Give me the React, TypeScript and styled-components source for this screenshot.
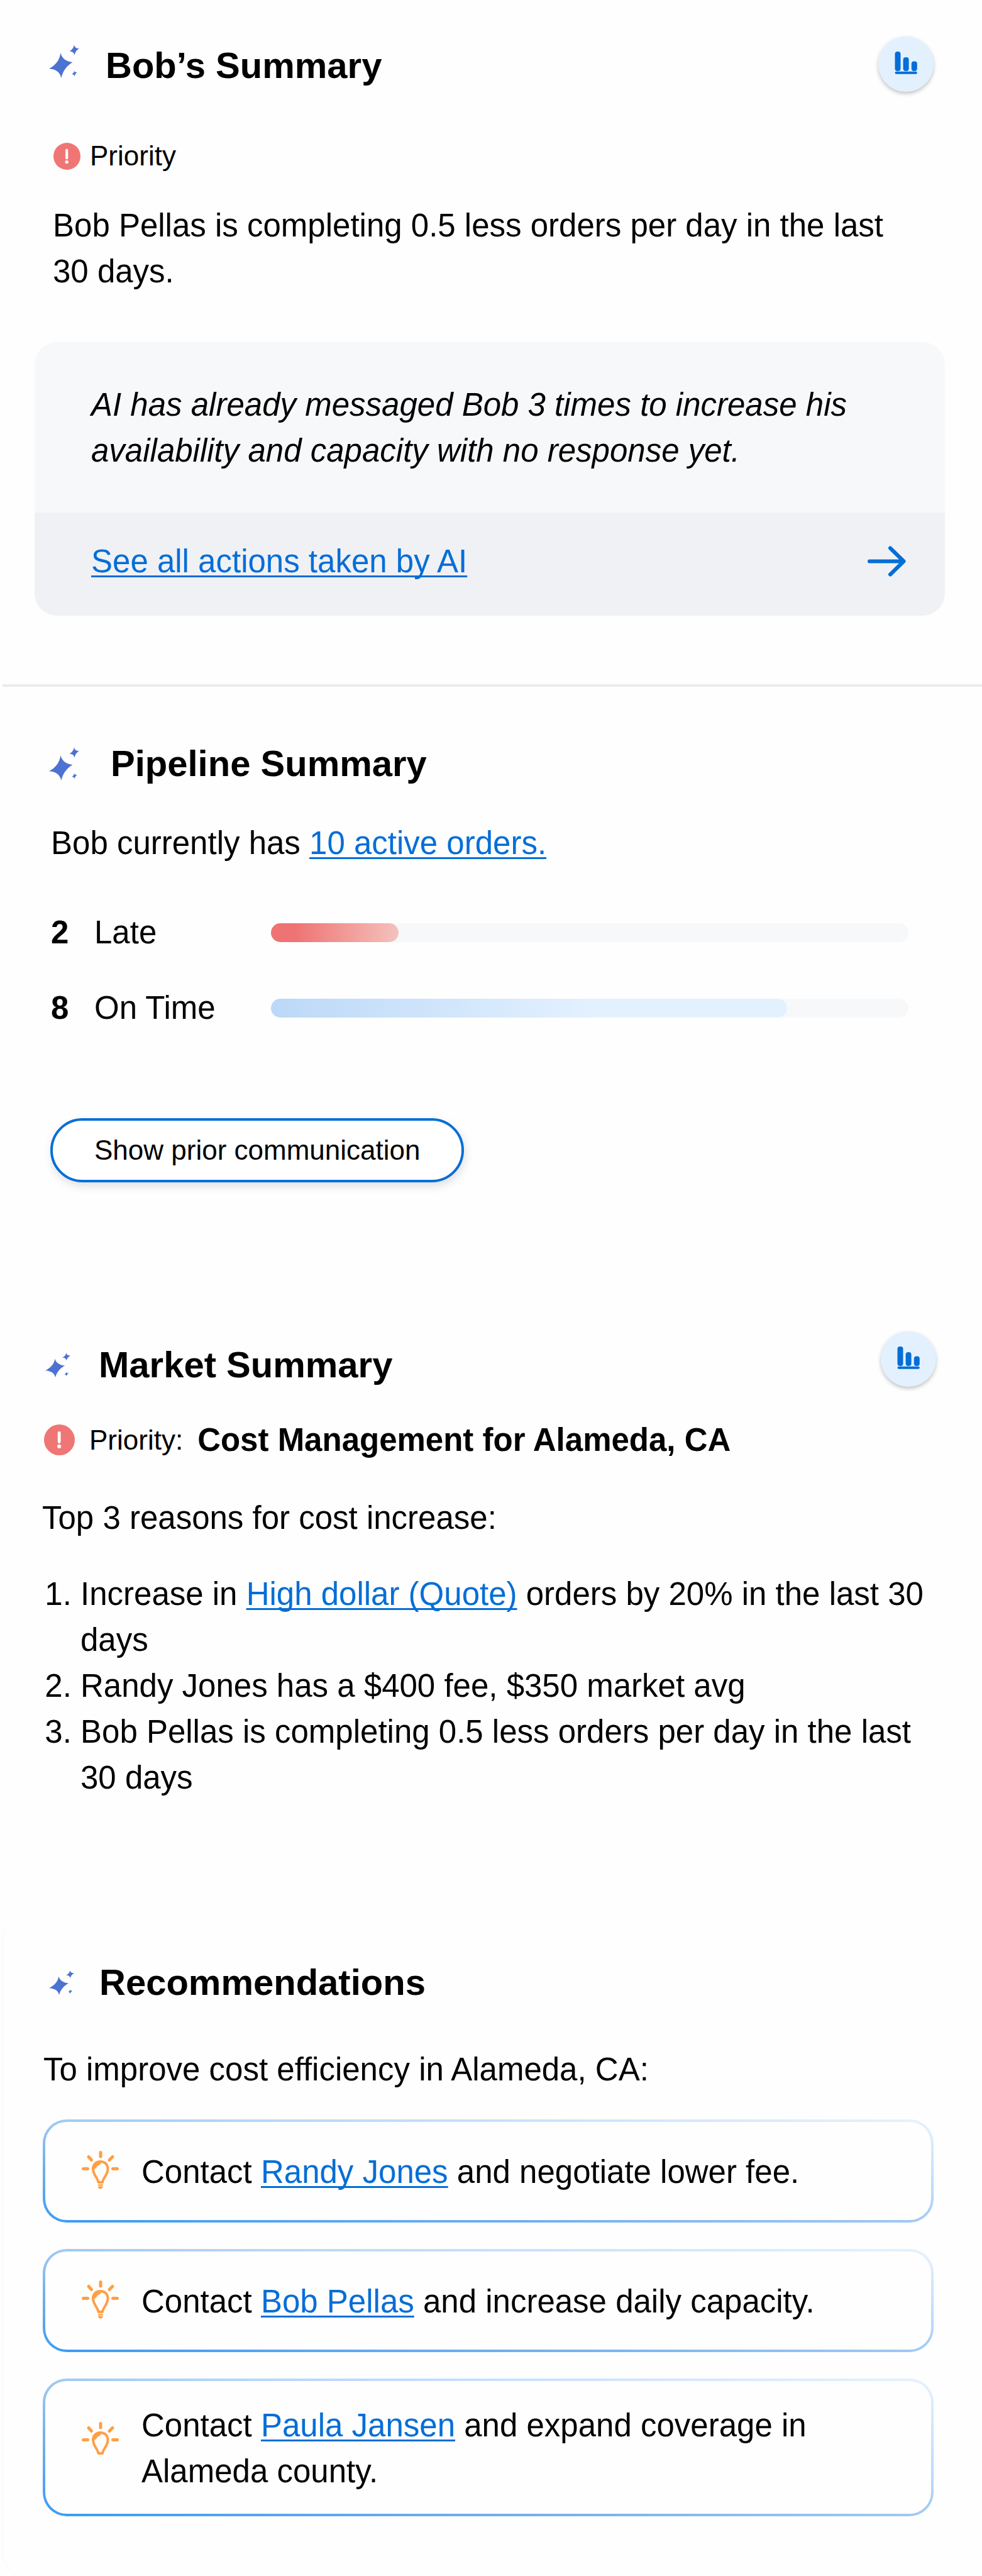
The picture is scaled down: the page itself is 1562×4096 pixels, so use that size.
import React from "react";
import styled, { createGlobalStyle } from "styled-components";

const GlobalStyle = createGlobalStyle`
  *, *::before, *::after { box-sizing: border-box; }
  body {
    margin: 0;
    background: #fefefe;
    color: #000;
    font-family: "Liberation Sans", Arial, Helvetica, sans-serif;
    font-size: 51px;
    line-height: 73px;
  }
  h2, p, ol, ul { margin: 0; padding: 0; }
  svg { display: block; flex: none; }
`;

const blue = "#056ed6";

const Page = styled.main`
  display: flex;
  flex-direction: column;
`;

const Section = styled.section<{ $top: number; $bottom: number }>`
  display: flex;
  flex-direction: column;
  padding: ${(p) => p.$top}px 59px ${(p) => p.$bottom}px 55px;
`;

const Divider = styled.hr`
  width: calc(100% - 4px);
  height: 4px;
  margin: 0 0 0 4px;
  border: 0;
  background: #ebebeb;
`;

const Header = styled.header<{ $left: number; $right?: number }>`
  display: flex;
  align-items: flex-start;
  justify-content: space-between;
  padding: 0 ${(p) => p.$right ?? 14}px 0 ${(p) => p.$left}px;
`;

const TitleRow = styled.div<{ $gap: number; $top?: number; $align?: string }>`
  display: flex;
  align-items: ${(p) => p.$align ?? "baseline"};
  gap: ${(p) => p.$gap}px;
  padding-top: ${(p) => p.$top ?? 0}px;
`;

const Title = styled.h2`
  font-size: 58px;
  line-height: 80px;
  font-weight: 700;
`;

const ChartButton = styled.button`
  display: flex;
  align-items: center;
  justify-content: center;
  width: 88px;
  height: 88px;
  flex: none;
  padding: 0;
  border: 0;
  border-radius: 50%;
  background: #e3f1ff;
  box-shadow: 0 3px 6px rgba(0, 0, 0, 0.24);
  cursor: pointer;
`;

const Text = styled.p<{ $top: number; $left: number; $right?: number }>`
  margin-top: ${(p) => p.$top}px;
  padding: 0 ${(p) => p.$right ?? 0}px 0 ${(p) => p.$left}px;
`;

const PriorityRow = styled.div<{ $top: number; $left: number; $gap: number }>`
  display: flex;
  align-items: center;
  gap: ${(p) => p.$gap}px;
  margin-top: ${(p) => p.$top}px;
  padding-left: ${(p) => p.$left}px;
`;

const Small = styled.span`
  font-size: 44px;
  line-height: 60px;
`;

const Link = styled.a`
  color: ${blue};
  text-decoration: underline;
  text-decoration-thickness: 3px;
  text-underline-offset: 5px;
  text-decoration-skip-ink: none;
`;

const AiCard = styled.div`
  display: flex;
  flex-direction: column;
  margin-top: 76px;
  border-radius: 36px;
  overflow: hidden;
  background: #f7f8fa;
`;

const AiMessage = styled.p`
  padding: 63px 88px 62px 90px;
  font-style: italic;
`;

const AiFooter = styled.div`
  display: flex;
  align-items: center;
  justify-content: space-between;
  padding: 41px 62px 50px 90px;
  background: #f0f1f5;
`;

const StatList = styled.ul`
  display: flex;
  flex-direction: column;
  gap: 47px;
  margin-top: 69px;
  padding: 0 58px 0 26px;
  list-style: none;
`;

const StatRow = styled.li`
  display: grid;
  grid-template-columns: 69px 281px 1fr;
  align-items: center;
`;

const Track = styled.div`
  height: 30px;
  border-radius: 15px;
  background: #f7f8fa;
`;

const Fill = styled.div<{ $tone: "late" | "ontime" }>`
  height: 100%;
  border-radius: 15px;
  background: ${(p) =>
    p.$tone === "late"
      ? "linear-gradient(90deg, #ee7372 18%, #f4c2bd)"
      : "linear-gradient(90deg, #bcd8f7, #e3f1ff 62%)"};
`;

const OutlineButton = styled.button`
  align-self: flex-start;
  margin: 139px 0 0 25px;
  padding: 17px 66px;
  border: 4px solid ${blue};
  border-radius: 51px;
  background: #fff;
  color: #000;
  font-family: inherit;
  font-size: 44px;
  line-height: 60px;
  box-shadow: 2px 6px 14px rgba(60, 70, 90, 0.16);
  cursor: pointer;
`;

const Reasons = styled.ol`
  margin-top: 48px;
  padding-left: 73px;
`;

const Panel = styled(Section)`
  margin-left: 4px;
  padding-left: 50px;
  border-left: 1px solid #f6f6f6;
  border-radius: 36px;
`;

const TipList = styled.ul`
  display: flex;
  flex-direction: column;
  gap: 42px;
  margin-top: 43px;
  padding: 0 18px 0 13px;
  list-style: none;
`;

const Tip = styled.li`
  display: flex;
  align-items: center;
  gap: 36px;
  min-height: 164px;
  padding: 34px 58px 31px;
  border: 4px solid transparent;
  border-radius: 38px;
  background:
    linear-gradient(#fefefe, #fefefe) padding-box,
    linear-gradient(to top right, #3a9bf6, #74b0ed 28%, #b9d7f8 62%, #e6f2ff) border-box;
`;

const TipIcon = styled.div<{ $tall: boolean }>`
  flex: none;
  margin-bottom: ${(p) => (p.$tall ? 24 : 6)}px;
`;

function Sparkle({ small = false }: { small?: boolean }) {
  return (
    <svg
      width={small ? 40 : 48}
      height={small ? 39 : 53}
      viewBox="0 0 48 53"
      preserveAspectRatio="none"
      fill="#4c72d2"
      aria-hidden="true"
    >
      <path d="M18.5 13C20 21 26 26.5 37.5 28C30 32 22 41 19.4 53C17.5 44 11 39 0 38.3C9 33.5 16.5 26 18.5 13Z" />
      <path d="M40 0C40.6 4 43 6 48 6C44 8.4 41.4 12 40.4 16.7C39.6 12.6 37 10.6 32.4 10.7C36.6 8.4 39.2 5 40 0Z" />
      <path d="M40.4 41.7C41 43.4 42 44.2 44.6 44C42.6 45.6 41.2 47.6 40.4 50.3C39.8 48 38.6 47 36.2 47C38.2 45.6 39.6 44.4 40.4 41.7Z" />
    </svg>
  );
}

function ChartIcon() {
  return (
    <svg width="36" height="40" viewBox="0 0 36 40" fill={blue} aria-hidden="true">
      <rect x="0.5" y="0" width="9" height="31" rx="4" />
      <rect x="13.6" y="9" width="9" height="22" rx="4" />
      <rect x="26.8" y="15.6" width="9" height="15.4" rx="4" />
      <rect x="0.5" y="31.7" width="35.3" height="4" rx="2" />
    </svg>
  );
}

function AlertIcon({ size }: { size: number }) {
  return (
    <svg width={size} height={size} viewBox="0 0 43 43" aria-hidden="true">
      <circle cx="21.5" cy="21.5" r="21.5" fill="#ef7675" />
      <path d="M21.2 11.8V24.4" stroke="#fff" strokeWidth="4.2" strokeLinecap="round" />
      <circle cx="21.2" cy="30.6" r="2.7" fill="#fff" />
    </svg>
  );
}

function ArrowIcon() {
  return (
    <svg
      width="61"
      height="49"
      viewBox="0 0 61 49"
      fill="none"
      stroke={blue}
      strokeWidth="6"
      strokeLinecap="round"
      strokeLinejoin="round"
      aria-hidden="true"
    >
      <path d="M3 24.5H57M36 3.5L57.5 24.5L36 45.5" />
    </svg>
  );
}

function BulbIcon({ base }: { base: boolean }) {
  return (
    <svg width="59" height="61" viewBox="0 0 59 61" fill="none" stroke="#ff9f45" aria-hidden="true">
      <path
        d="M30 2.5V9M2.5 28.5H9.5M49.5 28.5H56.5M11 9.5L15.5 14.5M49 9.5L44 14.5"
        strokeWidth="5"
        strokeLinecap="round"
      />
      <path
        d="M26.5 50C25.5 43 18 38 18 28.5C18 21.5 23 17 29.7 17C36.5 17 41.5 21.5 41.5 28.5C41.5 38 34 43 33 50Z"
        strokeWidth="4"
        strokeLinejoin="round"
      />
      <path
        d="M19 28.5C19 21.5 23.5 18 30.5 18.5C30 21.5 27.5 22.5 24.5 23.5C23.5 26 23 28 19 28.5Z"
        fill="#ff9f45"
        strokeWidth="1"
      />
      {base && (
        <path
          d="M25.8 53.2H33.8V55.4H25.8ZM25.8 56.4H33.8C33.8 59 32 60.5 29.8 60.5C27.6 60.5 25.8 59 25.8 56.4Z"
          fill="#ff9f45"
          stroke="none"
        />
      )}
    </svg>
  );
}

const stats: { count: number; label: string; tone: "late" | "ontime"; share: number }[] = [
  { count: 2, label: "Late", tone: "late", share: 20 },
  { count: 8, label: "On Time", tone: "ontime", share: 81 },
];

const tips = [
  { name: "Randy Jones", action: "and negotiate lower fee.", tall: false },
  { name: "Bob Pellas", action: "and increase daily capacity.", tall: false },
  { name: "Paula Jansen", action: "and expand coverage in Alameda county.", tall: true },
];

export default function App() {
  return (
    <>
      <GlobalStyle />
      <Page>
        <Section $top={58} $bottom={109}>
          <Header $left={23} $right={18}>
            <TitleRow $gap={42} $top={6}>
              <Sparkle />
              <Title>Bob’s Summary</Title>
            </TitleRow>
            <ChartButton type="button" aria-label="Show chart">
              <ChartIcon />
            </ChartButton>
          </Header>
          <PriorityRow $top={72} $left={30} $gap={15}>
            <AlertIcon size={43} />
            <Small>Priority</Small>
          </PriorityRow>
          <Text $top={44} $left={29} $right={60}>
            Bob Pellas is completing 0.5 less orders per day in the last 30 days.
          </Text>
          <AiCard>
            <AiMessage>
              AI has already messaged Bob 3 times to increase his availability and capacity with no
              response yet.
            </AiMessage>
            <AiFooter>
              <Link href="#actions">See all actions taken by AI</Link>
              <a href="#actions" aria-label="Open actions">
                <ArrowIcon />
              </a>
            </AiFooter>
          </AiCard>
        </Section>

        <Divider />

        <Section $top={82} $bottom={237}>
          <Header $left={23}>
            <TitleRow $gap={50} $align="center">
              <Sparkle />
              <Title>Pipeline Summary</Title>
            </TitleRow>
          </Header>
          <Text $top={50} $left={26}>
            Bob currently has <Link href="#orders">10 active orders.</Link>
          </Text>
          <StatList>
            {stats.map((s) => (
              <StatRow key={s.label}>
                <strong>{s.count}</strong>
                <span>{s.label}</span>
                <Track>
                  <Fill $tone={s.tone} style={{ width: `${s.share}%` }} />
                </Track>
              </StatRow>
            ))}
          </StatList>
          <OutlineButton type="button">Show prior communication</OutlineButton>
        </Section>

        <Section $top={0} $bottom={187}>
          <Header $left={17}>
            <TitleRow $gap={45} $top={13}>
              <Sparkle small />
              <Title>Market Summary</Title>
            </TitleRow>
            <ChartButton type="button" aria-label="Show chart">
              <ChartIcon />
            </ChartButton>
          </Header>
          <PriorityRow $top={43} $left={15} $gap={23}>
            <AlertIcon size={49} />
            <Small>Priority:</Small>
            <strong>Cost Management for Alameda, CA</strong>
          </PriorityRow>
          <Text $top={51} $left={12}>
            Top 3 reasons for cost increase:
          </Text>
          <Reasons>
            <li>
              Increase in <Link href="#quotes">High dollar (Quote)</Link> orders by 20% in the last
              30 days
            </li>
            <li>Randy Jones has a $400 fee, $350 market avg</li>
            <li>Bob Pellas is completing 0.5 less orders per day in the last 30 days</li>
          </Reasons>
        </Section>

        <Panel $top={62} $bottom={95}>
          <Header $left={23}>
            <TitleRow $gap={40}>
              <Sparkle small />
              <Title>Recommendations</Title>
            </TitleRow>
          </Header>
          <Text $top={62} $left={14}>
            To improve cost efficiency in Alameda, CA:
          </Text>
          <TipList>
            {tips.map((t) => (
              <Tip key={t.name}>
                <TipIcon $tall={t.tall}>
                  <BulbIcon base={!t.tall} />
                </TipIcon>
                <p>
                  Contact <Link href="#contact">{t.name}</Link> {t.action}
                </p>
              </Tip>
            ))}
          </TipList>
        </Panel>
      </Page>
    </>
  );
}
